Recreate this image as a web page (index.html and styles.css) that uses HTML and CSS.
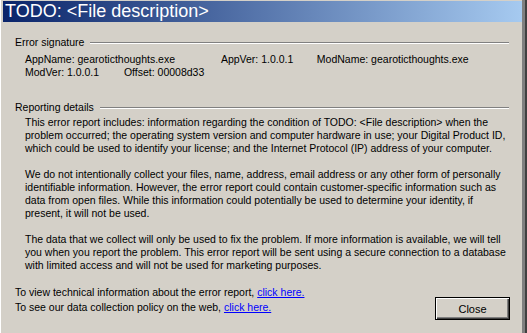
FILE: index.html
```html
<!DOCTYPE html>
<html lang="en">
<head>
    <meta charset="UTF-8">
    <title>TODO: &lt;File description&gt;</title>
    <link rel="stylesheet" href="styles.css">
</head>
<body>
    <div class="window">
        <div class="titlebar">TODO: &lt;File description&gt;</div>

        <div class="content">
            <div class="group-label"><span>Error signature</span><i class="etched"></i></div>
            <div class="signature">
                <div class="sig-row">
                    <span class="col-a">AppName: gearoticthoughts.exe</span>
                    <span class="col-b">AppVer: 1.0.0.1</span>
                    <span>ModName: gearoticthoughts.exe</span>
                </div>
                <div class="sig-row">
                    <span class="col-c">ModVer: 1.0.0.1</span>
                    <span>Offset: 00008d33</span>
                </div>
            </div>

            <div class="group-label details-label"><span>Reporting details</span><i class="etched"></i></div>
            <div class="details">
                <p>This error report includes: information regarding the condition of TODO: &lt;File description&gt; when the<br>problem occurred; the operating system version and computer hardware in use; your Digital Product ID,<br>which could be used to identify your license; and the Internet Protocol (IP) address of your computer.</p>
                <p>We do not intentionally collect your files, name, address, email address or any other form of personally<br>identifiable information. However, the error report could contain customer-specific information such as<br>data from open files. While this information could potentially be used to determine your identity, if<br>present, it will not be used.</p>
                <p>The data that we collect will only be used to fix the problem. If more information is available, we will tell<br>you when you report the problem. This error report will be sent using a secure connection to a database<br>with limited access and will not be used for marketing purposes.</p>
            </div>

            <div class="footer-row">
                <div class="links">
                    <div>To view technical information about the error report, <a href="#">click here.</a></div>
                    <div>To see our data collection policy on the web, <a href="#">click here.</a></div>
                </div>
                <button class="close-btn">Close</button>
            </div>
        </div>
    </div>
</body>
</html>
```

FILE: styles.css
```css
* {
    margin: 0;
    padding: 0;
    box-sizing: border-box;
}

body {
    width: 527px;
    height: 333px;
    overflow: hidden;
    background-color: #d4d0c8;
    font-family: "Liberation Sans", Arial, sans-serif;
    font-size: 10.5px;
    color: #000000;
}

.window {
    width: 527px;
    height: 334px;
    padding: 1px 2px 0 3px;
    border-right: 2px solid #404040;
    box-shadow: inset -3px 0 0 #808080, inset 1px 0 0 #ffffff;
}

.titlebar {
    height: 21px;
    line-height: 21px;
    padding-left: 2px;
    margin-right: 1px;
    font-size: 18px;
    color: #ffffff;
    background: linear-gradient(to right, #0a246a, #a6caf0);
    white-space: nowrap;
}

.content {
    padding: 14px 0 0 12px;
}

/* group header with etched line */
.group-label {
    display: flex;
    align-items: center;
    height: 13px;
    line-height: 13px;
    padding-right: 14px;
}

.group-label span {
    padding-right: 6px;
}

.etched {
    flex: 1;
    height: 2px;
    border-top: 1px solid #808080;
    border-bottom: 1px solid #ffffff;
}

.signature {
    padding: 4px 0 0 10px;
    line-height: 13px;
}

.sig-row {
    white-space: nowrap;
}

.sig-row span {
    display: inline-block;
}

.col-a {
    width: 193px;
}

.col-b {
    width: 93px;
}

.col-c {
    width: 96px;
}

.details-label {
    margin-top: 22px;
}

.details {
    padding: 2px 0 0 10px;
    line-height: 13px;
    white-space: nowrap;
}

.details p + p {
    margin-top: 13px;
}

.footer-row {
    display: flex;
    justify-content: space-between;
    align-items: flex-start;
    margin-top: 13px;
    padding-right: 13px;
}

.links {
    line-height: 14px;
}

.links div + div {
    margin-top: 1px;
}

.links a {
    color: #0000ff;
}

.close-btn {
    margin-top: 12px;
    width: 75px;
    height: 23px;
    font-family: inherit;
    font-size: 11px;
    background-color: #d4d0c8;
    border: 1px solid #000000;
    box-shadow: inset 1px 1px 0 #ffffff, inset -1px -1px 0 #404040, inset -2px -2px 0 #808080;
}
```
